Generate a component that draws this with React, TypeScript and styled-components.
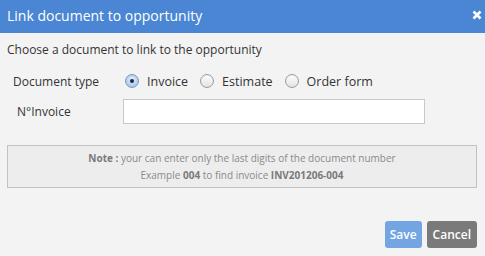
import styled, { createGlobalStyle } from 'styled-components';

const GlobalStyle = createGlobalStyle`
  html, body {
    margin: 0;
    padding: 0;
    background: #f3f3f3;
  }
  body {
    font-family: "Open Sans", "Liberation Sans", sans-serif;
    color: #333;
  }
`;

const Dialog = styled('section')`
  display: flex;
  flex-direction: column;
  height: 256px;
  width: 485px;
  background: #f3f3f3;
`;

const Header = styled('header')`
  align-items: center;
  background: #4a86d3;
  color: #fff;
  display: flex;
  height: 33px;
  justify-content: space-between;
  padding: 0 2px 0 7px;
  box-sizing: border-box;
`;

const Title = styled('h1')`
  font-size: 14px;
  font-weight: normal;
  margin: 0;
  margin-top: -2px;
`;

const CloseButton = styled('button')`
  background: none;
  border: 0;
  cursor: pointer;
  display: flex;
  padding: 0 1px 0 0;
  margin-top: -3px;
`;

const Body = styled('div')`
  display: flex;
  flex-direction: column;
  padding: 8px 8px 0 7px;
`;

const Intro = styled('p')`
  font-size: 12px;
  line-height: 18px;
  margin: 0 0 10px;
`;

const FormRow = styled('div')<{ gap?: number }>`
  align-items: center;
  display: flex;
  margin-bottom: ${ props => props.gap ?? 0 }px;
  min-height: 24px;
`;

const Label = styled('label')<{ indent: number }>`
  font-size: 12px;
  padding-left: ${ props => props.indent }px;
  width: ${ props => 116 - props.indent }px;
`;

const RadioGroup = styled('div')`
  align-items: center;
  display: flex;
  gap: 12px;
  margin-left: 2px;
`;

const RadioOption = styled('label')`
  align-items: center;
  display: flex;
  font-size: 12.5px;
  gap: 8px;
`;

const Radio = styled('span')<{ checked: boolean }>`
  border: 1px solid ${ props => props.checked ? '#7f9ab8' : '#9c9c9c' };
  border-radius: 50%;
  box-sizing: border-box;
  display: inline-flex;
  align-items: center;
  justify-content: center;
  height: 14px;
  width: 14px;
  background: ${ props => props.checked
    ? 'radial-gradient(circle at 50% 35%, #e4effd 0%, #a9c8f0 75%, #8fb3e6 100%)'
    : 'linear-gradient(#ffffff, #e2e2e2)' };
  box-shadow: inset 0 1px 1px rgba(0, 0, 0, 0.08);

  &::after {
    content: '';
    display: ${ props => props.checked ? 'block' : 'none' };
    width: 4px;
    height: 4px;
    border-radius: 50%;
    background: #1d2a3a;
  }
`;

const TextInput = styled('input')`
  background: #fff;
  border: 1px solid #c8c8c8;
  box-sizing: border-box;
  height: 25px;
  width: 302px;
  padding: 0 6px;
  font-family: inherit;
`;

const Note = styled('div')`
  background: #ededee;
  border: 1px solid #c2c2c2;
  color: #8a8a8a;
  font-size: 10px;
  line-height: 17px;
  margin-top: 21px;
  padding: 4px 0 3px;
  text-align: center;

  b {
    color: #7a7a7a;
  }
`;

const Footer = styled('div')`
  display: flex;
  gap: 5px;
  justify-content: flex-end;
  margin-top: 33px;
`;

const Button = styled('button')<{ variant: 'primary' | 'default' }>`
  background: ${ props => props.variant === 'primary' ? '#72a5e1' : '#7a7a7a' };
  border: 0;
  border-radius: 3px;
  color: #fff;
  font-family: inherit;
  font-size: 12px;
  font-weight: 600;
  height: 27px;
  padding: 0 ${ props => props.variant === 'primary' ? 5 : 6 }px;
  cursor: pointer;
`;

const TYPES = ['Invoice', 'Estimate', 'Order form'];

const App: React.FC = () => {
  const selected = 'Invoice';

  return (
    <Dialog>
      <GlobalStyle />
      <Header>
        <Title>Link document to opportunity</Title>
        <CloseButton aria-label="Close">
          <svg width="10" height="10" viewBox="0 0 10 10">
            <path d="M1.5 1.5 L8.5 8.5 M8.5 1.5 L1.5 8.5" stroke="#fff" strokeWidth="2.6" strokeLinecap="butt" />
          </svg>
        </CloseButton>
      </Header>
      <Body>
        <Intro>Choose a document to link to the opportunity</Intro>
        <FormRow gap={ 6 }>
          <Label indent={ 6 }>Document type</Label>
          <RadioGroup>
            { TYPES.map((type) => (
              <RadioOption key={ type }>
                <Radio checked={ type === selected } />
                { type }
              </RadioOption>
            )) }
          </RadioGroup>
        </FormRow>
        <FormRow>
          <Label indent={ 10 }>N°Invoice</Label>
          <TextInput />
        </FormRow>
        <Note>
          <b>Note :</b> your can enter only the last digits of the document number<br />
          Example <b>004</b> to find invoice <b>INV201206-004</b>
        </Note>
        <Footer>
          <Button variant="primary">Save</Button>
          <Button variant="default">Cancel</Button>
        </Footer>
      </Body>
    </Dialog>
  );
};

export default App;
